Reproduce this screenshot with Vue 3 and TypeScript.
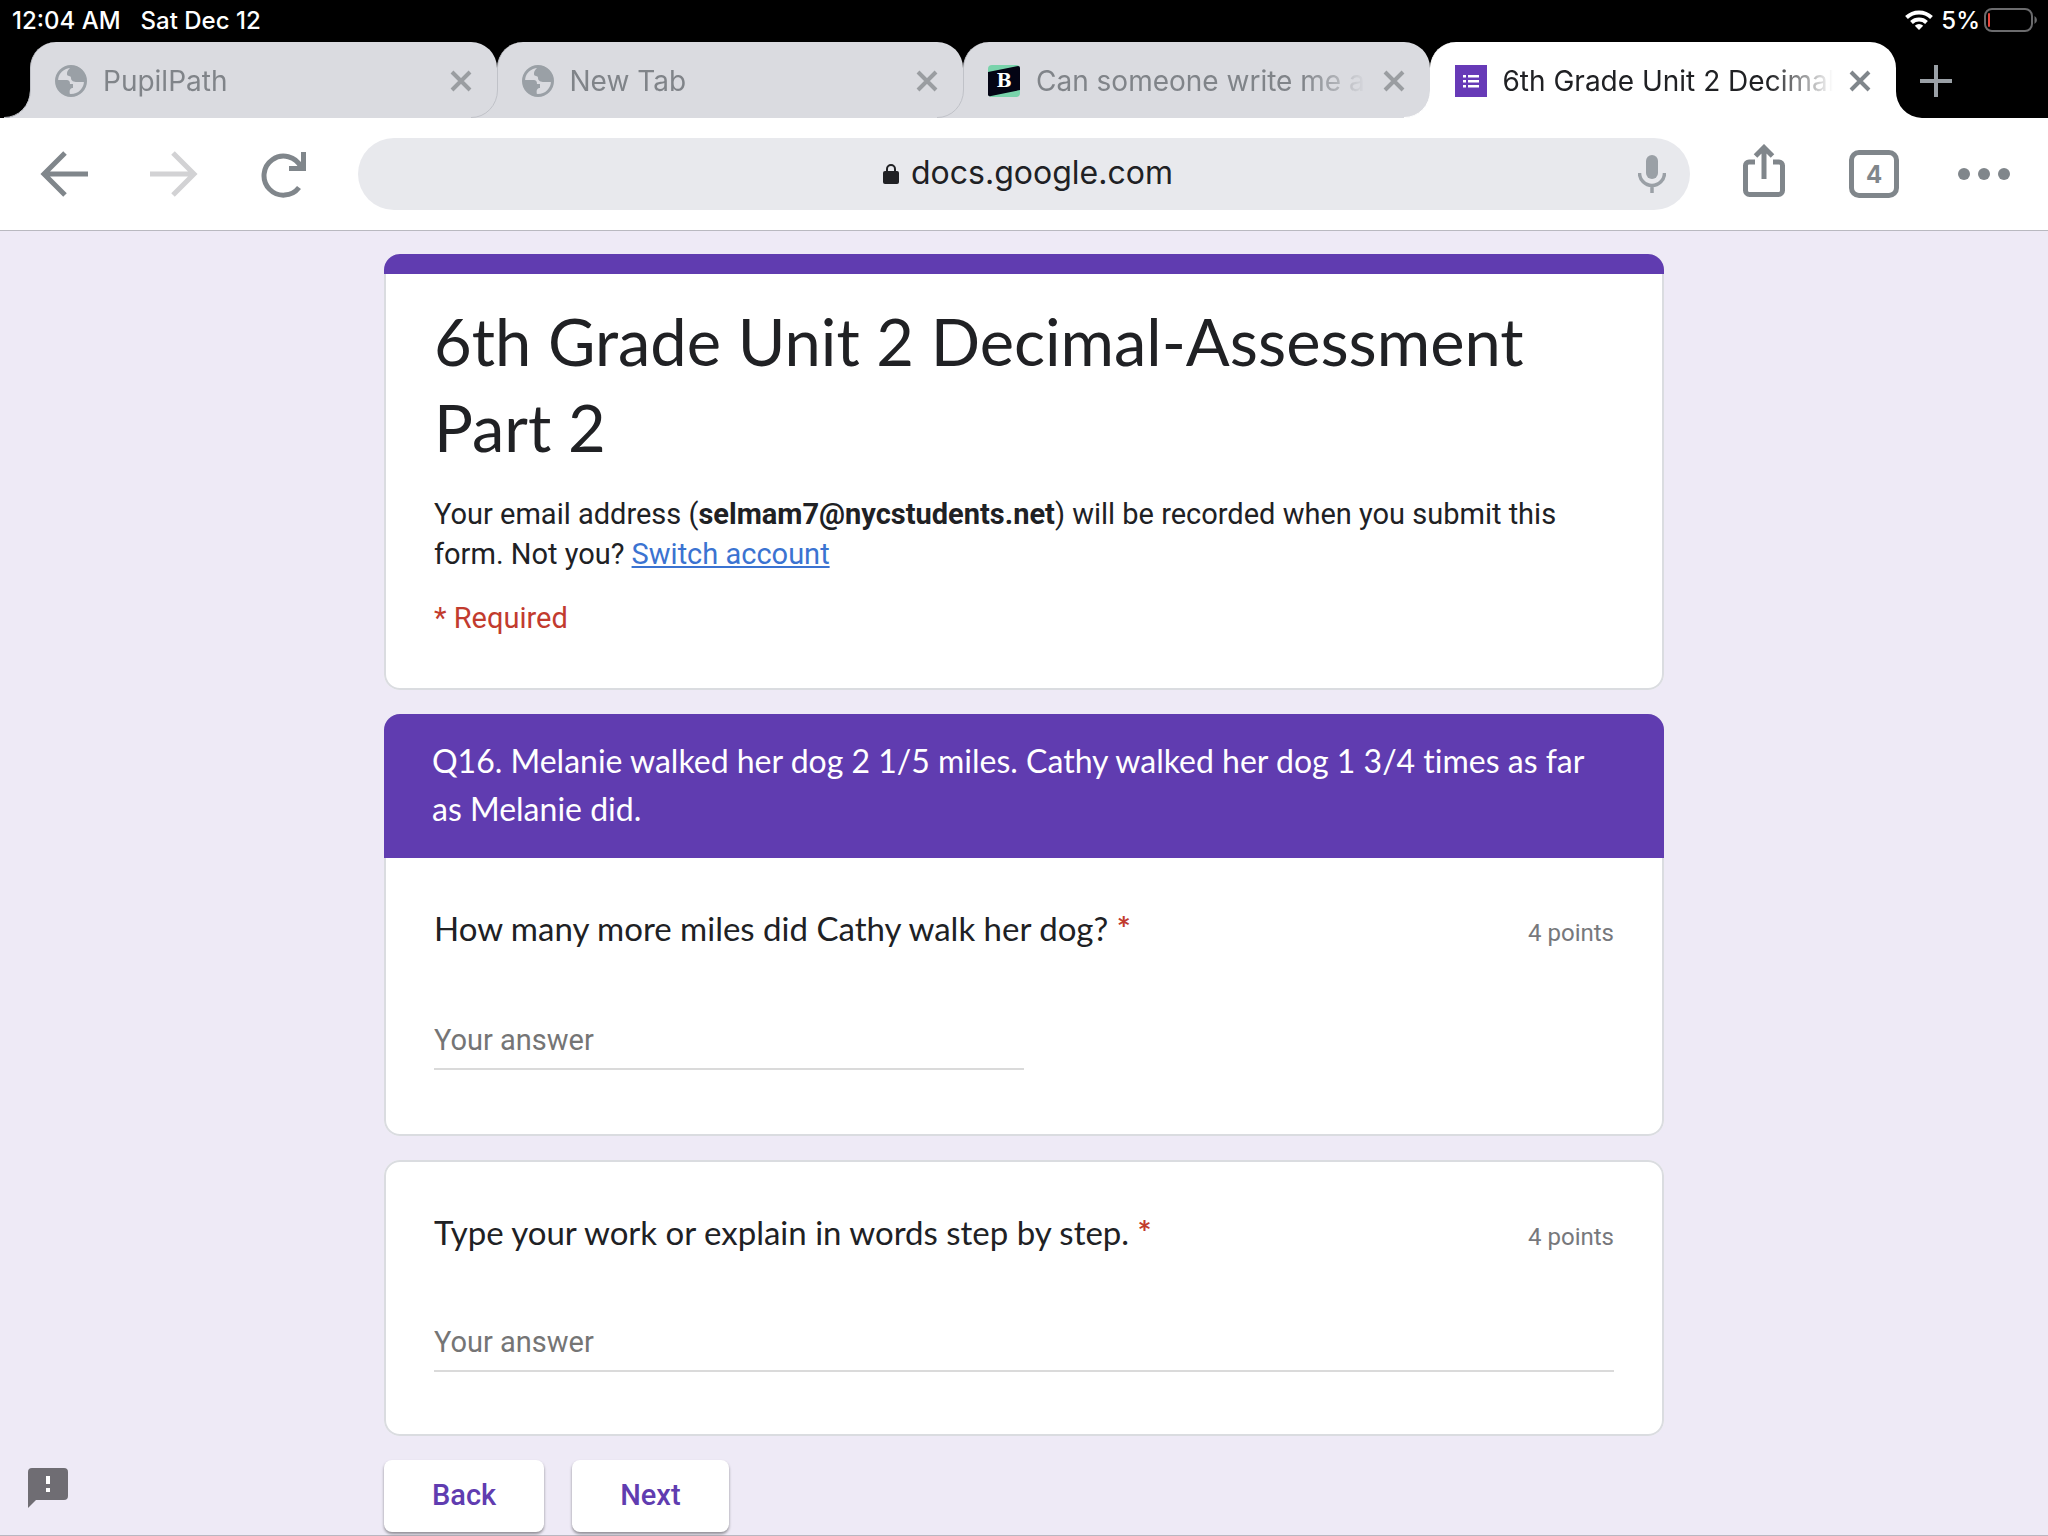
<script setup lang="ts">
import { ref } from 'vue'

interface Tab {
  title: string
  icon: 'globe' | 'brainly' | 'forms'
}

interface Question {
  id: string
  prompt: string
  points: string
  long: boolean
  section?: string
}

const tabs: Tab[] = [
  { title: 'PupilPath', icon: 'globe' },
  { title: 'New Tab', icon: 'globe' },
  { title: 'Can someone write me an essay', icon: 'brainly' },
  { title: '6th Grade Unit 2 Decimal-Assessment', icon: 'forms' },
]
const activeTab = ref(3)
const address = ref('docs.google.com')

const questions: Question[] = [
  {
    id: 'q16-miles',
    prompt: 'How many more miles did Cathy walk her dog?',
    points: '4 points',
    long: false,
    section:
      'Q16. Melanie walked her dog 2 1/5 miles. Cathy walked her dog 1 3/4 times as far as Melanie did.',
  },
  {
    id: 'q16-work',
    prompt: 'Type your work or explain in words step by step.',
    points: '4 points',
    long: true,
  },
]
const answers = ref<Record<string, string>>({ 'q16-miles': '', 'q16-work': '' })
</script>

<template>
  <div class="screen">
    <header>
      <div class="status">
        <span>12:04 AM</span>
        <span>Sat Dec 12</span>
        <span class="spacer"></span>
        <svg class="wifi" width="28" height="20" viewBox="0 0 28 20" aria-hidden="true">
          <g fill="none" stroke="#fff" stroke-width="4">
            <path d="M1.5 7.5a18 18 0 0 1 25 0" />
            <path d="M6.5 12.5a11 11 0 0 1 15 0" />
          </g>
          <path d="M14 20l-4.2-4.3a6 6 0 0 1 8.4 0z" fill="#fff" />
        </svg>
        <span>5%</span>
        <svg class="battery" width="54" height="24" viewBox="0 0 54 24" aria-hidden="true">
          <rect x="1" y="1" width="47" height="22" rx="7" fill="none" stroke="#6b6b6d" stroke-width="2" />
          <rect x="4" y="5" width="2" height="14" rx="1" fill="#e8453c" />
          <path d="M50.500 8v8a4.500 4.500 0 0 0 0-8z" fill="#6b6b6d" />
        </svg>
      </div>

      <nav class="tabs" aria-label="Open tabs">
        <div
          v-for="(tab, i) in tabs"
          :key="tab.title"
          class="tab"
          :class="{ active: i === activeTab }"
          @click="activeTab = i"
        >
          <svg class="flare left" width="28" height="28" viewBox="0 0 28 28" aria-hidden="true">
            <path class="flare-fill" d="M26 0A26 27 0 0 1 0 28H28V0z" />
            <path class="flare-line" d="M26.500 0A26 27.500 0 0 1 0 27.500" />
          </svg>
          <svg v-if="i === activeTab" class="flare right" width="28" height="28" viewBox="0 0 28 28" aria-hidden="true">
            <path class="flare-fill" d="M2 0A26 27 0 0 0 28 28H0V0z" />
          </svg>

          <svg v-if="tab.icon === 'globe'" class="favicon" viewBox="0 0 32 32" aria-hidden="true">
            <circle cx="16" cy="16" r="14.500" fill="none" stroke="#9aa0a6" stroke-width="3" />
            <path
              d="M18 1C15 3 12 5 12 9c0 3 4 1 4 4 0 3 3 4 6 4h8C31 8 26 1 18 1zM2 15h9c3 0 4 1 4 4h3v4c-3 0-4 2-3 7C7 30 2 24 2 15z"
              fill="#9aa0a6"
            />
          </svg>
          <svg v-else-if="tab.icon === 'brainly'" class="favicon" viewBox="0 0 32 32" aria-hidden="true">
            <rect width="32" height="32" rx="4" fill="#79d3ab" />
            <path d="M0 7L30 1a2 2 0 0 1 2 2v22L3 31a2 2 0 0 1-3-2z" fill="#030414" />
            <text x="16" y="22" text-anchor="middle" class="brainly-letter">B</text>
          </svg>
          <svg v-else class="favicon" viewBox="0 0 32 32" aria-hidden="true">
            <rect width="32" height="32" fill="#673ab7" />
            <path
              d="M8 10h3v2.500H8zm0 5h3v2.500H8zm0 5h3v2.500H8zm5 -10h11v2.500H13zm0 5h11v2.500H13zm0 5h11v2.500H13z"
              fill="#fff"
            />
          </svg>
          <span class="tab-title">{{ tab.title }}</span>
          <button class="icon-button close" type="button" :aria-label="`Close ${tab.title}`">
            <svg width="22" height="22" viewBox="0 0 22 22" aria-hidden="true">
              <path d="M2 2l18 18M20 2L2 20" fill="none" stroke="currentColor" stroke-width="4" />
            </svg>
          </button>
        </div>
        <button class="icon-button new-tab" type="button" aria-label="New tab">
          <svg width="32" height="32" viewBox="0 0 32 32" aria-hidden="true">
            <path d="M16 0v32M0 16h32" stroke="#9aa0a6" stroke-width="4" />
          </svg>
        </button>
      </nav>

      <div class="toolbar">
        <div class="nav-buttons">
          <button class="icon-button" type="button" aria-label="Back">
            <svg width="48" height="48" viewBox="0 0 48 48" aria-hidden="true">
              <path d="M48 24H4M25 3L4 24l21 21" fill="none" stroke="#80868b" stroke-width="5" />
            </svg>
          </button>
          <button class="icon-button" type="button" aria-label="Forward" disabled>
            <svg width="48" height="48" viewBox="0 0 48 48" aria-hidden="true">
              <path d="M0 24h44M23 3l21 21-21 21" fill="none" stroke="#d2d2d4" stroke-width="5" />
            </svg>
          </button>
          <button class="icon-button" type="button" aria-label="Reload">
            <svg width="48" height="48" viewBox="0 0 48 48" aria-hidden="true">
              <path d="M39 37.500A19.500 19.500 0 1 1 41 17" fill="none" stroke="#80868b" stroke-width="5" />
              <path d="M41 2h5v19H29v-5h12z" fill="#80868b" />
            </svg>
          </button>
        </div>

        <div class="omnibox">
          <div class="location">
            <label class="lock" for="address">
              <svg width="16" height="20" viewBox="0 0 16 20" role="img" aria-label="Secure address">
                <rect y="7" width="16" height="13" rx="2" fill="#202124" />
                <path d="M4 8V5a4 4 0 0 1 8 0v3" fill="none" stroke="#202124" stroke-width="2" />
              </svg>
            </label>
            <input id="address" v-model="address" class="address" type="text" />
          </div>
          <button class="icon-button mic" type="button" aria-label="Voice search">
            <svg width="28" height="38" viewBox="0 0 28 38" aria-hidden="true">
              <rect x="8" y="0" width="12" height="24" rx="6" fill="#9aa0a6" />
              <path d="M1.500 18a12.500 12.500 0 0 0 25 0M14 30v8" fill="none" stroke="#9aa0a6" stroke-width="3.500" />
            </svg>
          </button>
        </div>

        <div class="actions">
          <button class="icon-button share" type="button" aria-label="Share">
            <svg width="42" height="60" viewBox="0 0 42 60" aria-hidden="true">
              <path
                d="M12 18H6a3.500 3.500 0 0 0-3.500 3.500V46.500a4 4 0 0 0 4 4h29a4 4 0 0 0 4-4V21.500A3.500 3.500 0 0 0 36 18h-6"
                fill="none"
                stroke="#80868b"
                stroke-width="5"
              />
              <path d="M21 35V4M12.500 12L21 3.500l8.500 8.500" fill="none" stroke="#80868b" stroke-width="5" />
            </svg>
          </button>
          <button class="tab-count" type="button" aria-label="Show 4 tabs">4</button>
          <button class="icon-button" type="button" aria-label="Menu">
            <svg width="54" height="14" viewBox="0 0 54 14" aria-hidden="true">
              <g fill="#80868b">
                <circle cx="7" cy="7" r="6" />
                <circle cx="27" cy="7" r="6" />
                <circle cx="47" cy="7" r="6" />
              </g>
            </svg>
          </button>
        </div>
      </div>
    </header>

    <main>
      <form class="form" @submit.prevent>
        <section class="card intro">
          <h1>6th Grade Unit 2 Decimal-Assessment Part 2</h1>
          <p class="account">
            Your email address (<strong>selmam7@nycstudents.net</strong>) will be recorded when you submit this
            form. Not you? <a href="#">Switch account</a>
          </p>
          <p class="required">* Required</p>
        </section>

        <section v-for="q in questions" :key="q.id" class="card" :class="{ sectioned: q.section }">
          <h2 v-if="q.section" class="section-title">{{ q.section }}</h2>
          <div class="question">
            <div class="prompt-row">
              <label class="prompt" :for="q.id">{{ q.prompt }} <span class="star">*</span></label>
              <span class="points">{{ q.points }}</span>
            </div>
            <input
              :id="q.id"
              v-model="answers[q.id]"
              class="answer"
              :class="{ long: q.long }"
              type="text"
              placeholder="Your answer"
              required
            />
          </div>
        </section>

        <div class="form-nav">
          <button type="button">Back</button>
          <button type="submit">Next</button>
        </div>
      </form>

      <button class="icon-button feedback" type="button" aria-label="Report a problem">
        <svg width="40" height="40" viewBox="0 0 40 40" aria-hidden="true">
          <path d="M4 0h32a4 4 0 0 1 4 4v24a4 4 0 0 1-4 4H8l-8 8V4a4 4 0 0 1 4-4z" fill="#6f6d73" />
          <path d="M18 8h4v8h-4zm0 12h4v4h-4z" fill="#fff" />
        </svg>
      </button>
    </main>
  </div>
</template>

<style>
body {
  margin: 0;
  background: #eeeaf6;
}
</style>

<style scoped>
*,
*::before,
*::after {
  box-sizing: border-box;
}

.screen {
  display: flex;
  flex-direction: column;
  min-height: 100vh;
  border-bottom: 1px solid #b9b7c1;
  background: #eeeaf6;
  color: #202124;
  font-family: Roboto, 'Liberation Sans', sans-serif;
}

button,
input {
  font: inherit;
  color: inherit;
}

.icon-button {
  display: flex;
  align-items: center;
  justify-content: center;
  padding: 0;
  border: 0;
  background: none;
}

header {
  font-family: Inter, 'Liberation Sans', sans-serif;
}

/* status bar */
.status {
  display: flex;
  align-items: center;
  gap: 20px;
  height: 42px;
  padding: 0 10px 2px 12px;
  background: #000;
  color: #fff;
  font-size: 24px;
  font-weight: 500;
}

.spacer {
  flex: 1;
}

.wifi {
  margin-right: -12px;
}

.battery {
  margin-left: -16px;
}

/* tab strip */
.tabs {
  display: flex;
  height: 76px;
  padding-left: 30px;
  background: #000;
}

.tab {
  --tab-bg: #dadbe0;
  --tab-line: #c0c2c8;
  position: relative;
  display: flex;
  flex: 1;
  align-items: center;
  gap: 16px;
  min-width: 0;
  padding: 2px 25px 0 24px;
  border-left: 1px solid var(--tab-line);
  border-radius: 26px 26px 0 0;
  background: var(--tab-bg);
  color: #808489;
  font-size: 28px;
}

.tab.active {
  --tab-bg: #fff;
  --tab-line: #fff;
  z-index: 1;
  color: #202124;
}

.flare {
  position: absolute;
  bottom: 0;
}

.flare.left {
  left: -27px;
}

.flare.right {
  right: -26px;
}

.flare-fill {
  fill: var(--tab-bg);
}

.flare-line {
  fill: none;
  stroke: var(--tab-line);
}

.favicon {
  flex: none;
  width: 32px;
  height: 32px;
}

.brainly-letter {
  fill: #fff;
  font: bold 18px 'DejaVu Serif', serif;
}

.tab-title {
  flex: 1;
  min-width: 0;
  overflow: hidden;
  white-space: nowrap;
  mask-image: linear-gradient(to left, transparent, #000 64px);
}

.close {
  flex: none;
  color: #9a9da1;
}

.active .close {
  color: #80868b;
}

.new-tab {
  flex: none;
  width: 76px;
  margin: 2px 74px 0 2px;
}

/* toolbar */
.toolbar {
  display: flex;
  align-items: center;
  height: 113px;
  padding: 0 37px 0 40px;
  border-bottom: 1px solid #b9b9c0;
  background: #fff;
}

.nav-buttons {
  display: flex;
  gap: 62px;
}

.omnibox {
  display: grid;
  flex: 1;
  grid-template-columns: 1fr auto 1fr;
  align-items: center;
  height: 72px;
  margin: 0 47px 0 50px;
  padding: 0 24px 0 38px;
  border-radius: 36px;
  background: #e8e9ed;
}

.location {
  display: flex;
  grid-column: 2;
  align-items: center;
  gap: 12px;
}

.lock {
  display: flex;
}

.address {
  width: 268px;
  padding: 0 0 4px;
  border: 0;
  outline: 0;
  background: none;
  font-size: 32px;
}

.mic {
  justify-self: end;
}

.actions {
  display: flex;
  align-items: center;
  gap: 58px;
}

.share {
  padding: 0 6px;
}

.tab-count {
  width: 50px;
  height: 48px;
  padding: 0;
  border: 5px solid #80868b;
  border-radius: 10px;
  background: none;
  color: #80868b;
  font-size: 24px;
  font-weight: 700;
}

/* form */
main {
  flex: 1;
  padding: 23px 24px 3px;
}

.form {
  display: flex;
  flex-direction: column;
  gap: 24px;
  max-width: 1280px;
  margin: 0 auto;
}

/* the outline is an inset shadow so that the purple bands paint over it */
.card {
  overflow: hidden;
  border-radius: 16px;
  background: #fff;
  box-shadow: inset 0 0 0 2px #dadce0;
}

.intro {
  padding: 0 50px 52px;
}

.intro::before {
  display: block;
  height: 20px;
  margin: 0 -50px 24px;
  background: #603cb0;
  content: '';
}

h1,
h2,
p {
  margin: 0;
  font-weight: 400;
}

h1,
.section-title,
.prompt {
  font-family: Lato, sans-serif;
  font-variant-ligatures: none;
}

h1 {
  font-size: 65px;
  line-height: 86px;
}

.account {
  margin-top: 24px;
  font-size: 29px;
  line-height: 40px;
}

.account a {
  color: #3b73d1;
}

.required {
  margin-top: 24px;
  color: #c23b2e;
  font-size: 29px;
  line-height: 40px;
}

.section-title {
  padding: 23px 48px 25px;
  background: #603cb0;
  color: #fff;
  font-size: 32px;
  line-height: 48px;
}

.question {
  padding: 48px 50px 64px;
}

.sectioned .question {
  padding: 46px 50px 66px;
}

.prompt-row {
  display: flex;
  align-items: baseline;
  justify-content: space-between;
  gap: 32px;
}

.prompt {
  font-size: 33px;
  line-height: 48px;
}

.star {
  color: #c23b2e;
  font-weight: 700;
}

.points {
  flex: none;
  color: #77787c;
  font-size: 24px;
}

.answer {
  display: block;
  width: 50%;
  height: 58px;
  margin-top: 60px;
  padding: 0;
  border: 0;
  border-bottom: 2px solid #dadada;
  outline: 0;
  background: none;
  font-size: 29px;
}

.answer.long {
  width: 100%;
  margin-top: 58px;
}

.answer::placeholder {
  color: #757575;
  opacity: 1;
}

.form-nav {
  display: flex;
  gap: 28px;
}

.form-nav button {
  height: 72px;
  padding: 0 48px 2px;
  border: 0;
  border-radius: 8px;
  background: #fff;
  box-shadow: 0 2px 3px rgb(0 0 0 / 40%);
  color: #603cb0;
  font-size: 29px;
  font-weight: 500;
}

.feedback {
  position: fixed;
  bottom: 28px;
  left: 28px;
}
</style>
